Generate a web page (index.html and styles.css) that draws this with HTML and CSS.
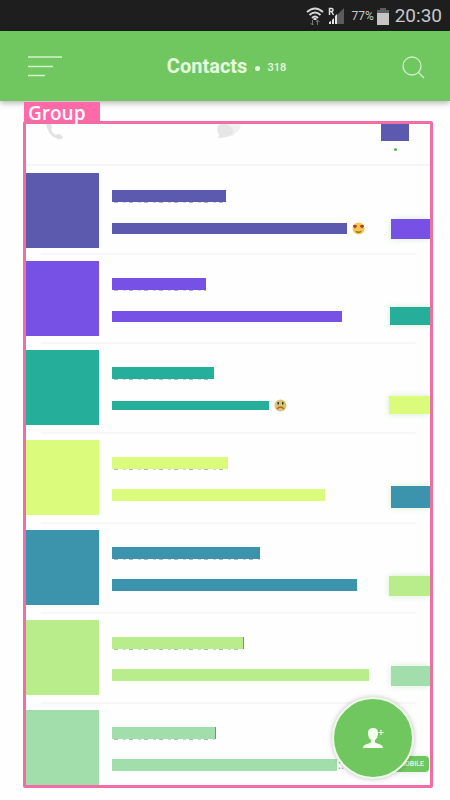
FILE: index.html
```html
<!DOCTYPE html>
<html lang="en">
<head>
<meta charset="utf-8">
<meta name="viewport" content="width=device-width, initial-scale=1">
<title>Contacts</title>
<link rel="stylesheet" href="styles.css">
</head>
<body>
<div class="status">
  <svg width="18" height="19" viewBox="0 0 18 19" fill="none" stroke="#d8d8d8" stroke-width="2"><path d="M1 5Q9-2 17 5M3.500 8Q9 3 14.500 8M6 11Q9 8 12 11"/><path d="M9 11v2" stroke-width="3"/><path d="M6.500 18v-5M4.500 16l2 2 1-1M11.500 13v5M10 15l1.500-2 2 2" stroke="#777" stroke-width="1"/></svg>
  <svg class="signal" width="17" height="18" viewBox="0 0 17 18"><path d="M8 17V9l8-8v16z" fill="#5b5b5b"/><path d="M1 17v-2l2-1v3zM4 17v-4l2-2v6zM7 17V9l2-2v10z" fill="#e4e4e4"/><path d="M1.500 8V1.500h2.200q1.300 0 1.300 1.500t-1.300 1.500H1.500M3.500 4.500L5.500 8" fill="none" stroke="#ddd" stroke-width="1.500"/></svg>
  <span class="percent">77%</span>
  <svg class="battery" width="12" height="17" viewBox="0 0 12 17"><path d="M3 0h6v2h3v4H0V2h3z" fill="#5e5e5e"/><path d="M0 5h12v12H0z" fill="#c4c4c4"/></svg>
  <span class="clock">20:30</span>
</div>
<header class="appbar">
  <button class="icon-btn" type="button" aria-label="Menu"><svg width="34" height="22" viewBox="0 0 34 22" fill="none" stroke="#d3f3cb" stroke-width="1.700"><path d="M0 2h34M0 11.500h25M0 20.500h17"/></svg></button>
  <h1 class="title">Contacts<span class="dot"></span><span class="count">318</span></h1>
  <button class="icon-btn find" type="button" aria-label="Search"><svg width="23" height="23" viewBox="0 0 23 23" fill="none" stroke="#cdf0c5" stroke-width="1.300"><circle cx="10" cy="10" r="9"/><path d="M16 16l6 6"/></svg></button>
</header>
<main class="page">
  <div class="group-label">Group</div>
  <section class="group">
    <nav class="tabs">
      <button class="tab phone" type="button" aria-label="Calls"><svg width="18" height="16" viewBox="0 0 18 16"><path d="M0 0h5l1 4-1 2q2 4 5 5l2-1q3 0 5 3-1 3-5 2Q2 12 0 0z" fill="#e2e2e2"/></svg></button>
      <button class="tab" type="button" aria-label="Messages"><svg width="24" height="15" viewBox="0 0 24 15"><path d="M7 0h16q2 6-5 9l-2 3q-3-1-6-1z" fill="#f1f1f1"/><path d="M1 1Q10-2 16 5q1 7-7 8-5 1-8 1l1-3Q-1 7 1 1z" fill="#e6e6e6"/></svg></button>
      <button class="tab current" type="button" aria-label="Contacts"><span class="tab-block"></span><span class="tab-dot"></span></button>
    </nav>
    <ul class="list">
      <li class="row c1"><span class="avatar"></span><div class="text"><span class="name" style="width:114px"></span><div class="line"><span class="message" style="width:235px;height:11px"></span><svg class="emoji" width="13" height="13" viewBox="0 0 13 13"><circle cx="6.500" cy="6.500" r="6" fill="#f3c94f"/><path d="M1.500 3l1.500 0 1.500 0 .5 1.500-2 2-2-2zM11.500 3H8.500L8 4.500l2 2 2-2z" fill="#b44025"/><path d="M3 8.500q3.500 2 7 0-1 2.500-3.500 2.500T3 8.500" fill="#9a6825"/></svg></div></div><span class="tag" style="width:39px;height:20px"></span></li>
      <li class="row c2"><span class="avatar"></span><div class="text"><span class="name" style="width:94px"></span><div class="line"><span class="message" style="width:230px;height:11px"></span></div></div><span class="tag" style="width:40px;height:18px"></span></li>
      <li class="row c3"><span class="avatar"></span><div class="text"><span class="name cut" style="width:102px"></span><div class="line"><span class="message" style="width:157px;height:9px"></span><svg class="emoji" width="13" height="13" viewBox="0 0 13 13"><circle cx="6.500" cy="6.500" r="6" fill="#d8c577"/><path d="M3.500 3h1.500v2.500H3.500zM8 3h1.500v2.500H8z" fill="#35331e"/><path d="M3 10q3.500-4 7 0" fill="none" stroke="#bd651f" stroke-width="1.500"/></svg></div></div><span class="tag" style="width:41px;height:18px"></span></li>
      <li class="row c4"><span class="avatar"></span><div class="text"><span class="name" style="width:116px"></span><div class="line"><span class="message" style="width:213px;height:12px"></span></div></div><span class="tag" style="width:39px;height:22px"></span></li>
      <li class="row c5"><span class="avatar"></span><div class="text"><span class="name" style="width:148px"></span><div class="line"><span class="message" style="width:245px;height:12px"></span></div></div><span class="tag" style="width:41px;height:20px"></span></li>
      <li class="row c6"><span class="avatar"></span><div class="text"><span class="name cut" style="width:132px"></span><div class="line"><span class="message" style="width:257px;height:12px"></span></div></div><span class="tag" style="width:39px;height:20px"></span></li>
      <li class="row c7"><span class="avatar"></span><div class="text"><span class="name cut" style="width:104px"></span><div class="line"><span class="message" style="width:225px;height:12px"></span><span class="rest">:.</span></div></div><span class="tag mobile">MOBILE</span></li>
    </ul>
    <button class="fab" type="button" aria-label="Add contact"><svg width="23" height="22" viewBox="0 0 23 22"><path d="M1 21q0-3 4-4 4-1 4-2V13Q6 11 6 6q0-5 5-5t5 5q0 5-3 7v2q0 1 4 2t4 4z" fill="#f5fff1"/><path d="M19 3v5M16.500 5.500h5" stroke="#f5fff1" stroke-width="1.200"/></svg></button>
  </section>
</main>
</body>
</html>
```
FILE: styles.css
```css
* { box-sizing: border-box; }

body {
  margin: 0;
  background: #fefefe;
  font-family: Roboto, "Liberation Sans", sans-serif;
}

button {
  padding: 0;
  border: 0;
  background: none;
  font: inherit;
}

svg { display: block; flex: none; }

.status {
  display: flex;
  align-items: center;
  justify-content: flex-end;
  height: 31px;
  padding: 2px 8px 0 0;
  background: #1e1e1e;
  border-bottom: 1px solid #17291a;
  color: #c8c8c8;
}

.signal { margin-left: 4px; }
.percent { margin-left: 6px; font-size: 12px; }
.battery { margin: 0 6px 0 3px; }
.clock { font-size: 19px; line-height: 24px; }

.appbar {
  position: relative;
  display: grid;
  grid-template-columns: 1fr auto 1fr;
  align-items: center;
  height: 70px;
  padding: 0 25px 0 28px;
  background: #70c75f;
  box-shadow: 0 2px 6px rgba(0, 0, 0, 0.3);
}

.icon-btn { justify-self: start; }
.find { justify-self: end; margin-top: 3px; }

.title {
  display: flex;
  align-items: center;
  margin: 0;
  color: #e6fbe0;
  font-size: 20px;
  line-height: 24px;
}

.dot {
  width: 5px;
  height: 5px;
  margin: 4px 7px 0 8px;
  border-radius: 50%;
  background: #e6fbe0;
}

.count { margin-top: 4px; font-size: 11px; font-weight: 500; }

.page { padding: 1px 17px 12px 23px; }

.group-label {
  position: relative;
  z-index: 1;
  width: 76px;
  height: 19px;
  margin-left: 1px;
  padding-left: 4px;
  background: #ff69a8;
  color: #fff;
  font: 600 19px/22px "Open Sans", sans-serif;
}

.group {
  position: relative;
  border: 3px solid #f26da5;
  border-radius: 2px;
}

.tabs {
  display: grid;
  grid-template-columns: 171fr 164fr 28px;
  height: 42px;
  padding: 0 21px 0 20px;
  border-bottom: 2px solid #f4f4f4;
}

.tab {
  display: flex;
  flex-direction: column;
  align-items: flex-start;
}

.current { align-items: center; }
.tab-block { width: 28px; height: 17px; background: #5c5aae; }
.tab-dot { width: 3px; height: 3px; margin-top: 7px; border-radius: 50%; background: #56b34c; }

.list {
  margin: 0;
  padding: 0;
  list-style: none;
}

.row {
  display: grid;
  grid-template-columns: 73px 1fr auto;
  column-gap: 13px;
  align-items: start;
  padding: 8px 0 7px;
  background: linear-gradient(#f7f7f7, #f7f7f7) no-repeat 15px 0 / calc(100% - 29px) 2px;
}

.row:first-child { padding: 7px 0 5px; background: none; }
.row:nth-child(2) { padding-bottom: 6px; }
.row:last-child { padding-bottom: 0; }

.avatar { height: 75px; background: var(--fill); }
.text { min-width: 0; padding-top: 17px; }

.name {
  position: relative;
  display: block;
  height: 12px;
  background: var(--fill);
}

/* Lower edge of the covered name */
.name::after {
  content: "";
  position: absolute;
  top: 100%;
  left: 2px;
  right: 0;
  height: 1px;
  background: repeating-linear-gradient(90deg, #b4b4be 0 4px, #fefefe 4px 9px, #cfcfd6 9px 12px, #fefefe 12px 15px);
}

.cut { border-right: 1px solid #7b8f76; }

.line {
  display: flex;
  align-items: center;
  height: 12px;
  margin-top: 20px;
}

.message { flex: none; background: var(--fill); }
.emoji { margin-left: 5px; }
.rest { margin-left: 1px; color: #999; font-size: 12px; }

.tag {
  margin-top: 46px;
  background: var(--tag);
  box-shadow: 0 0 6px rgba(112, 199, 95, 0.3);
}

.c1 { --fill: #5c5aae; --tag: #7751e6; }
.c2 { --fill: #7751e6; --tag: #25ae99; }
.c3 { --fill: #25ae99; --tag: #dafb7b; }
.c4 { --fill: #dafb7b; --tag: #3b94ab; }
.c5 { --fill: #3b94ab; --tag: #b9ed8b; }
.c6 { --fill: #b9ed8b; --tag: #a1deab; }
.c7 { --fill: #a1deab; --tag: #70c75f; }

.mobile {
  margin-right: 1px;
  padding: 0 5px;
  border-radius: 4px;
  color: #e6fbe0;
  font-size: 7px;
  font-weight: 500;
  line-height: 16px;
}

.fab {
  position: absolute;
  right: 16px;
  bottom: 6px;
  display: grid;
  place-items: center;
  width: 82px;
  height: 82px;
  border: 2px solid #eefbea;
  border-radius: 50%;
  background: #70c75f;
  box-shadow: 0 0 5px rgba(0, 0, 0, 0.25);
}
```
